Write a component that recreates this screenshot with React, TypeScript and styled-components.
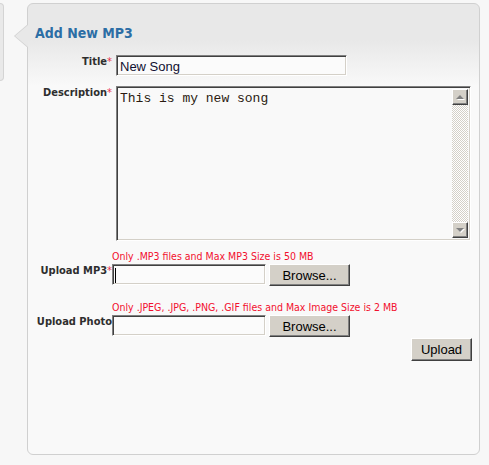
import React from 'react';
import styled, { createGlobalStyle } from 'styled-components';

const GlobalStyle = createGlobalStyle`
  html, body {
    margin: 0;
    padding: 0;
    background: #f7f7f7;
  }
  body {
    font-family: "DejaVu Sans Condensed", "DejaVu Sans", sans-serif;
  }
`;

const Page = styled.div`
  display: flex;
  align-items: flex-start;
  padding-top: 3px;
  height: 465px;
  box-sizing: border-box;
`;

const SideTab = styled.div`
  width: 3px;
  height: 76px;
  background: #e9e9e9;
  border: 1px solid #d4d4d4;
  border-left: none;
  border-radius: 0 5px 5px 0;
`;

const Panel = styled.div`
  position: relative;
  margin-left: 23px;
  width: 451px;
  height: 450px;
  border: 1px solid #d0d0d0;
  border-radius: 6px;
  background: linear-gradient(#e8e8e8 0, #e8e8e8 36px, #f9f9f9 82px, #f9f9f9 100%);
`;

const Arrow = styled.div`
  position: absolute;
  left: -14px;
  top: 20px;
  width: 0;
  height: 0;
  border-top: 12px solid transparent;
  border-bottom: 12px solid transparent;
  border-right: 14px solid #d0d0d0;

  &::after {
    content: '';
    position: absolute;
    left: 1px;
    top: -11px;
    border-top: 11px solid transparent;
    border-bottom: 11px solid transparent;
    border-right: 13px solid #e8e8e8;
  }
`;

const Heading = styled.h2`
  margin: 0;
  padding: 20px 0 0 7px;
  font-size: 14px;
  line-height: 18px;
  font-weight: bold;
  color: #2c6ea5;
`;

const Form = styled.div`
  display: flex;
  flex-direction: column;
  padding-top: 13px;
`;

const Row = styled.div<{ $align?: string; $gap?: number; $top?: number }>`
  display: flex;
  align-items: ${(p) => p.$align || 'flex-start'};
  gap: ${(p) => p.$gap ?? 4}px;
  margin-top: ${(p) => p.$top ?? 0}px;
`;

const Label = styled.div<{ $pad?: number }>`
  width: 84px;
  flex: none;
  text-align: right;
  font-size: 11px;
  line-height: 13px;
  font-weight: bold;
  color: #2e2e2e;
  padding-bottom: ${(p) => p.$pad ?? 0}px;
  white-space: nowrap;
`;

const Star = styled.span`
  color: #e8304a;
  font-weight: normal;
`;

const insetBorder = `
  box-sizing: border-box;
  border-top: 1px solid #808080;
  border-left: 1px solid #808080;
  border-right: 1px solid #ffffff;
  border-bottom: 1px solid #ffffff;
  box-shadow: inset 1px 1px 0 #404040, inset -1px -1px 0 #d4d0c8;
`;

const TextInput = styled.input`
  ${insetBorder}
  width: 231px;
  height: 21px;
  margin-top: 0;
  padding: 2px 3px 0;
  background: #fbfbfb;
  font-family: "Liberation Sans", Arial, sans-serif;
  font-size: 13px;
  color: #101030;
  outline: none;
`;

const AreaBox = styled.div`
  ${insetBorder}
  width: 355px;
  height: 155px;
  display: flex;
  background: #f9f9f9;
  padding: 2px;
`;

const Area = styled.textarea`
  flex: 1;
  border: none;
  resize: none;
  background: transparent;
  padding: 2px 1px;
  margin: 0;
  overflow: hidden;
  font-family: "Liberation Mono", "Courier New", monospace;
  font-size: 13px;
  line-height: 15px;
  color: #2a1a10;
  outline: none;
`;

const ScrollBar = styled.div`
  width: 16px;
  display: flex;
  flex-direction: column;
  justify-content: space-between;
  background: repeating-conic-gradient(#d4d0c8 0 25%, #ffffff 0 50%) 0 0 / 2px 2px;
`;

const ScrollButton = styled.div<{ $down?: boolean }>`
  box-sizing: border-box;
  width: 16px;
  height: 16px;
  background: #d4d0c8;
  border-top: 1px solid #ffffff;
  border-left: 1px solid #ffffff;
  border-right: 1px solid #404040;
  border-bottom: 1px solid #404040;
  box-shadow: inset -1px -1px 0 #808080;
  display: flex;
  align-items: center;
  justify-content: center;

  &::before {
    content: '';
    width: 0;
    height: 0;
    border-left: 4px solid transparent;
    border-right: 4px solid transparent;
    ${(p) => (p.$down ? 'border-top: 4px solid #808080;' : 'border-bottom: 4px solid #808080;')}
    filter: drop-shadow(1px 1px 0 #ffffff);
  }
`;

const FieldCol = styled.div`
  display: flex;
  flex-direction: column;
`;

const Note = styled.div`
  font-size: 10.5px;
  line-height: 13px;
  color: #f2102e;
  white-space: nowrap;
  margin-bottom: 1px;
`;

const FileLine = styled.div`
  display: flex;
  align-items: flex-start;
  gap: 3px;
`;

const FileBox = styled.div`
  ${insetBorder}
  width: 154px;
  height: 21px;
  background: #fbfbfb;
  padding: 3px 2px;
  display: flex;
`;

const Caret = styled.div`
  width: 1px;
  height: 15px;
  background: #000000;
`;

const Button = styled.button<{ $w: number; $h: number }>`
  box-sizing: border-box;
  width: ${(p) => p.$w}px;
  height: ${(p) => p.$h}px;
  padding: 0;
  background: #d4d0c8;
  border-top: 1px solid #ffffff;
  border-left: 1px solid #ffffff;
  border-right: 1px solid #404040;
  border-bottom: 1px solid #404040;
  box-shadow: inset -1px -1px 0 #808080;
  font-family: "Liberation Sans", Arial, sans-serif;
  font-size: 13px;
  color: #000000;
`;

const Actions = styled.div`
  display: flex;
  justify-content: flex-end;
  padding-right: 7px;
  margin-top: 1px;
`;

const App: React.FC = () => {
  return (
    <>
      <GlobalStyle />
      <Page>
        <SideTab />
        <Panel>
          <Arrow />
          <Heading>Add New MP3</Heading>
          <Form>
            <Row>
              <Label>
                Title<Star>*</Star>
              </Label>
              <TextInput defaultValue="New Song" />
            </Row>
            <Row $top={10}>
              <Label>
                Description<Star>*</Star>
              </Label>
              <AreaBox>
                <Area defaultValue="This is my new song" />
                <ScrollBar>
                  <ScrollButton />
                  <ScrollButton $down />
                </ScrollBar>
              </AreaBox>
            </Row>
            <Row $align="flex-end" $gap={-1} $top={9}>
              <Label $pad={9}>
                Upload MP3<Star>*</Star>
              </Label>
              <FieldCol>
                <Note>Only .MP3 files and Max MP3 Size is 50 MB</Note>
                <FileLine>
                  <FileBox>
                    <Caret />
                  </FileBox>
                  <Button $w={81} $h={22}>Browse...</Button>
                </FileLine>
              </FieldCol>
            </Row>
            <Row $align="flex-end" $gap={-1} $top={15}>
              <Label $pad={9}>Upload Photo</Label>
              <FieldCol>
                <Note>Only .JPEG, .JPG, .PNG, .GIF files and Max Image Size is 2 MB</Note>
                <FileLine>
                  <FileBox />
                  <Button $w={81} $h={22}>Browse...</Button>
                </FileLine>
              </FieldCol>
            </Row>
            <Actions>
              <Button $w={61} $h={23}>Upload</Button>
            </Actions>
          </Form>
        </Panel>
      </Page>
    </>
  );
};

export default App;
